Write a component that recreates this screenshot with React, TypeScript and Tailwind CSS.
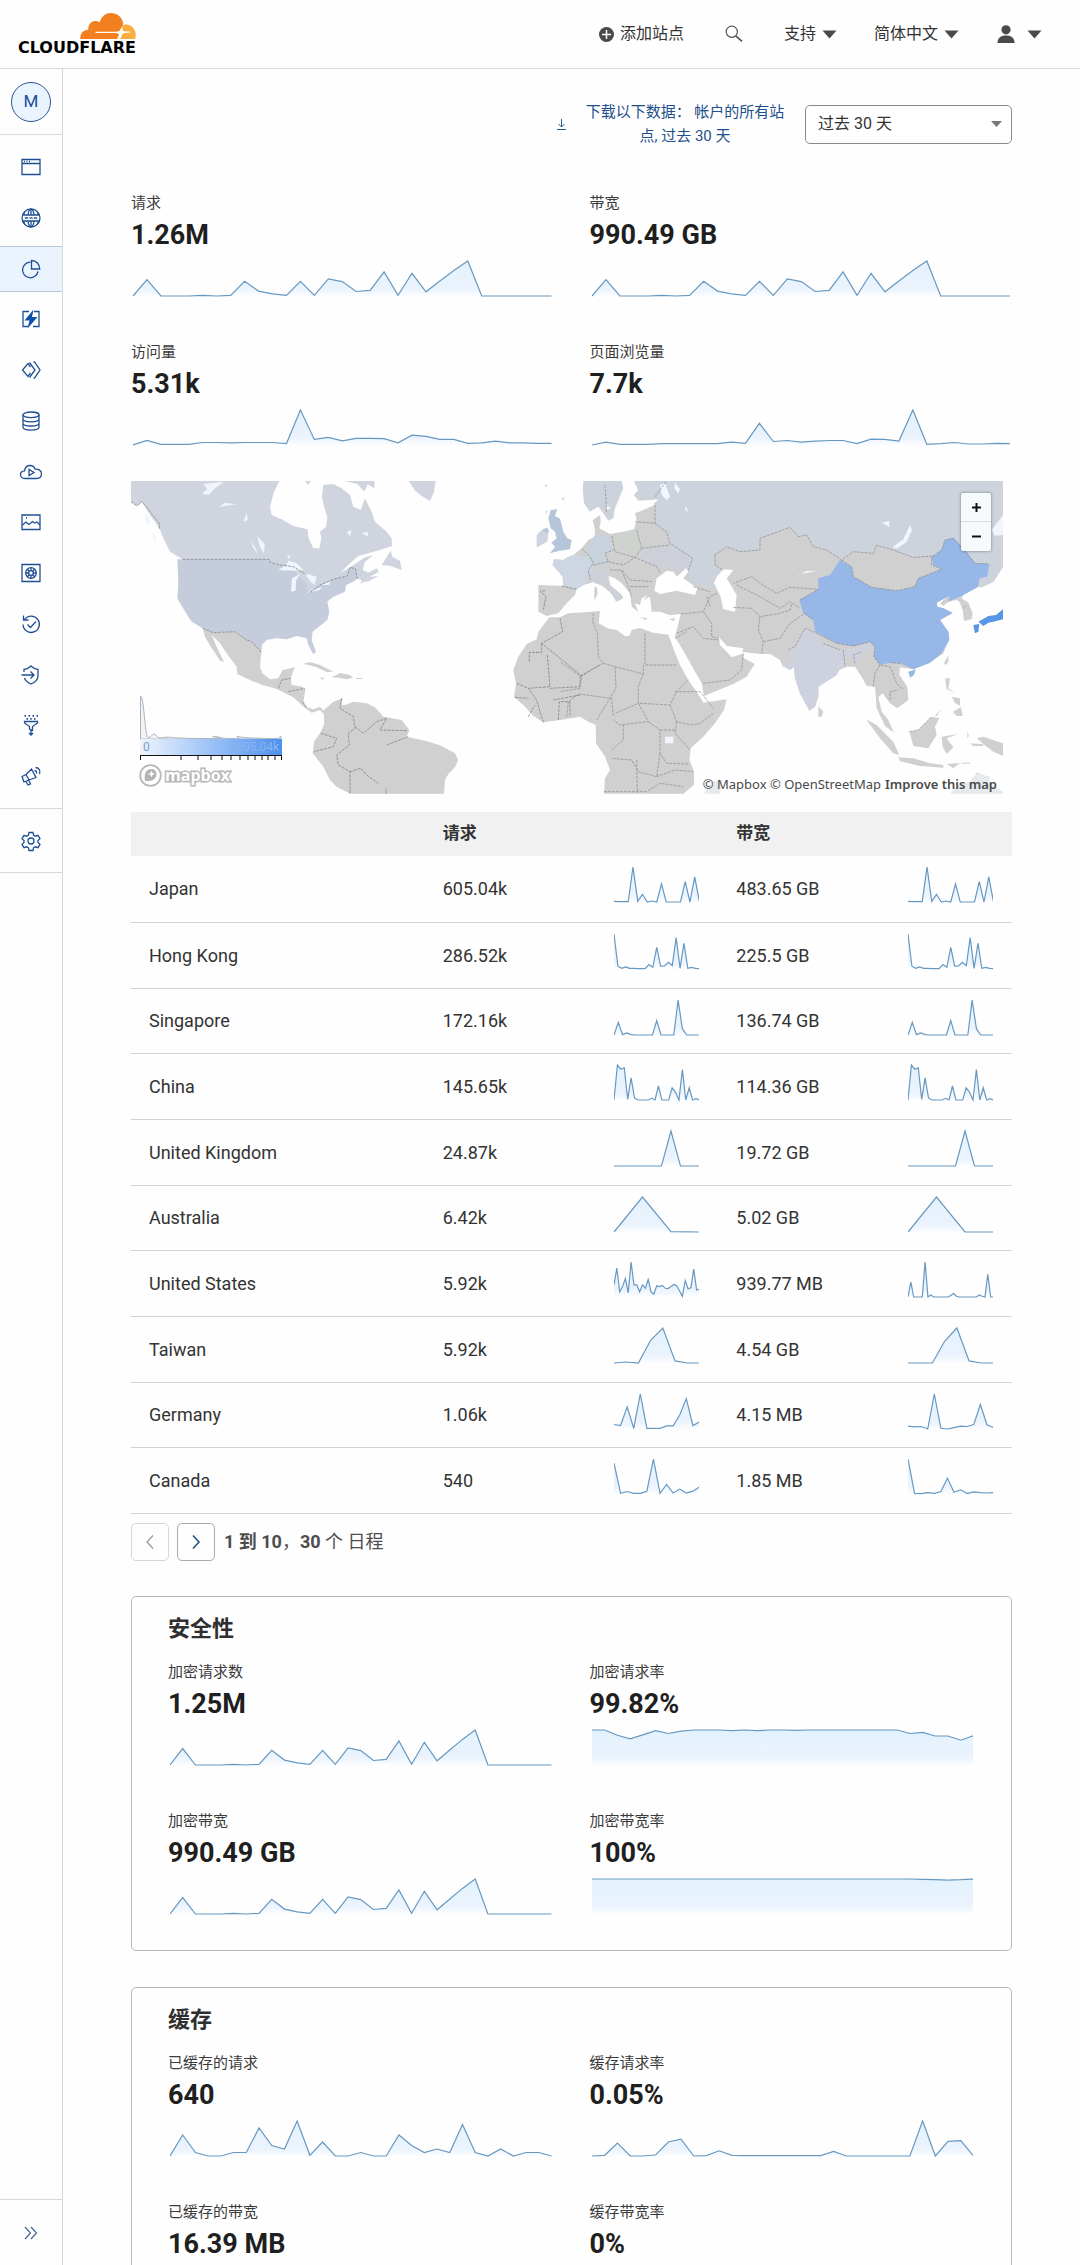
import React, { useId } from "react";

const requests = [0, 0.47, 0, 0, 0, 0.02, 0, 0.02, 0.42, 0.14, 0.06, 0.02, 0.42, 0.02, 0.49, 0.41, 0.13, 0.16, 0.69, 0.02, 0.65, 0.12, 0.43, 0.73, 1, 0, 0, 0, 0, 0, 0];
const visits = [0, 0.13, 0.02, 0.02, 0.02, 0.07, 0.07, 0.06, 0.07, 0.07, 0.07, 0.04, 1, 0.16, 0.22, 0.12, 0.19, 0.19, 0.18, 0.06, 0.28, 0.25, 0.16, 0.16, 0.05, 0.06, 0.11, 0.06, 0.06, 0.05, 0.05];
const pageViews = [0, 0.08, 0.02, 0.02, 0.02, 0.04, 0.04, 0.04, 0.04, 0.04, 0.08, 0.05, 0.62, 0.1, 0.13, 0.08, 0.11, 0.13, 0.13, 0.04, 0.17, 0.16, 0.11, 1, 0.02, 0.04, 0.07, 0.03, 0.03, 0.05, 0.04];
const encryptedRate = [1, 1, 0.85, 0.75, 0.86, 0.98, 0.9, 0.97, 1, 1, 1, 0.98, 1, 0.98, 1, 1, 0.99, 1, 1, 1, 1, 1, 1, 1, 1, 0.9, 0.93, 0.83, 0.83, 0.71, 0.84];
const encryptedBandwidthRate = [1, 1, 1, 1, 1, 1, 1, 1, 1, 1, 1, 1, 1, 1, 1, 1, 1, 1, 1, 1, 1, 1, 1, 1, 1, 1, 0.99, 0.98, 0.97, 0.98, 1];
const cachedRequests = [0, 0.6, 0.1, 0, 0, 0.1, 0.1, 0.8, 0.3, 0.2, 1, 0.02, 0.4, 0, 0, 0.1, 0, 0, 0.6, 0.3, 0.1, 0.2, 0.1, 0.9, 0.1, 0, 0.2, 0, 0.1, 0.1, 0];
const cacheRate = [0, 0.02, 0.37, 0, 0, 0.03, 0.4, 0.48, 0, 0.01, 0.15, 0.02, 0.01, 0.01, 0.01, 0.01, 0.01, 0.01, 0.01, 0.13, 0, 0, 0, 0, 0, 0, 1, 0, 0.42, 0.44, 0];

const japan = [0.02, 0.01, 0.01, 0.01, 1, 0.02, 0.22, 0, 0.03, 0, 0.52, 0, 0, 0, 0, 0.58, 0, 0.72, 0];
const hongKong = [1, 0.08, 0.02, 0.06, 0.02, 0.02, 0.01, 0.01, 0.01, 0.13, 0.05, 0.62, 0.08, 0.09, 0.19, 0.1, 0.9, 0.02, 0.73, 0.02, 0.05, 0.02, 0.01];
const singapore = [0, 0.36, 0.01, 0.06, 0.01, 0, 0, 0, 0, 0, 0.41, 0, 0, 0, 0, 1, 0.18, 0, 0, 0, 0];
const china = [0, 1, 0.88, 0.92, 0.02, 0.63, 0.06, 0, 0, 0, 0, 0.05, 0, 0.4, 0, 0, 0, 0.35, 0.22, 0, 0.87, 0, 0.35, 0, 0.04, 0];
const unitedKingdom = [0, 0, 0, 0, 0, 0, 1, 0, 0, 0];
const rows: { name: string; req: string; bw: string; a: number[]; b: number[] }[] = [
  { name: "Japan", req: "605.04k", bw: "483.65 GB", a: japan, b: japan },
  { name: "Hong Kong", req: "286.52k", bw: "225.5 GB", a: hongKong, b: hongKong },
  { name: "Singapore", req: "172.16k", bw: "136.74 GB", a: singapore, b: singapore },
  { name: "China", req: "145.65k", bw: "114.36 GB", a: china, b: china },
  { name: "United Kingdom", req: "24.87k", bw: "19.72 GB", a: unitedKingdom, b: unitedKingdom },
  { name: "Australia", req: "6.42k", bw: "5.02 GB", a: [0, 1, 0.01, 0], b: [0, 1, 0, 0] },
  {
    name: "United States", req: "5.92k", bw: "939.77 MB",
    a: [0.35, 0.83, 0.15, 0.3, 0.53, 0.12, 1, 0.35, 0.35, 0.15, 0.35, 0.25, 0.5, 0.15, 0.08, 0.32, 0.3, 0.33, 0.25, 0.24, 0.3, 0.36, 0.32, 0.18, 0.02, 0.47, 0.23, 0.27, 0.8, 0.2, 0.22],
    b: [0, 0.43, 0, 0, 0, 0, 1, 0, 0.06, 0, 0, 0, 0, 0, 0, 0.04, 0.1, 0.02, 0, 0, 0, 0, 0, 0, 0, 0.06, 0.02, 0, 0.65, 0, 0],
  },
  { name: "Taiwan", req: "5.92k", bw: "4.54 GB", a: [0, 0.03, 0, 0.65, 1, 0.06, 0, 0], b: [0, 0, 0, 0.62, 1, 0.06, 0, 0] },
  {
    name: "Germany", req: "1.06k", bw: "4.15 MB",
    a: [0.13, 0.1, 0.63, 0.02, 1, 0.02, 0.02, 0.02, 0.09, 0.09, 0.4, 0.87, 0.1, 0.2],
    b: [0.08, 0.06, 0.07, 0, 1, 0.02, 0, 0.04, 0.08, 0.07, 0.13, 0.7, 0.12, 0.04],
  },
  {
    name: "Canada", req: "540", bw: "1.85 MB",
    a: [0.88, 0.02, 0.07, 0.02, 0.02, 0.08, 1, 0.02, 0.27, 0.03, 0.14, 0.03, 0.08, 0.2],
    b: [1, 0.02, 0.01, 0.04, 0.02, 0.07, 0.45, 0.05, 0.12, 0.01, 0.06, 0.04, 0.03, 0.04],
  },
];

function Sparkline({ data }: { data: number[] }) {
  const id = useId();
  const pts = data.map((v, i) => `${((i / (data.length - 1)) * 1000).toFixed(1)},${(37 - v * 35).toFixed(1)}`).join(" ");
  return (
    <svg className="block h-[39px] w-full px-0.5" viewBox="0 0 1000 39" preserveAspectRatio="none" aria-hidden="true">
      <defs>
        <linearGradient id={id} gradientUnits="userSpaceOnUse" x1="0" y1="0" x2="0" y2="37">
          <stop offset="0" stopColor="#e2f2fd" />
          <stop offset="0.8" stopColor="#ebf3fd" />
          <stop offset="1" stopColor="#fbfdff" />
        </linearGradient>
      </defs>
      <polygon points={`0,37 ${pts} 1000,37`} fill={`url(#${id})`} />
      <polyline points={pts} fill="none" stroke="#6798c0" strokeWidth="1.2" vectorEffect="non-scaling-stroke" />
    </svg>
  );
}

function Stat({ label, value, data }: { label: string; value: string; data: number[] }) {
  return (
    <div>
      <div className="text-[15px] leading-6 text-[#3b3b3b]">{label}</div>
      <div className="mt-0.5 text-[27px] leading-9 font-bold text-[#1f1f1f]">{value}</div>
      <div className="mt-1.5">
        <Sparkline data={data} />
      </div>
    </div>
  );
}

function Card({ title, children }: { title: string; children: React.ReactNode }) {
  return (
    <section className="rounded-[5px] border border-[#b9b9b9] px-9 pt-4 pb-[34px]">
      <h2 className="mb-[15px] text-[22px] leading-8 font-bold text-[#2f2f2f]">{title}</h2>
      <div className="grid grid-cols-2 gap-x-9 gap-y-[42px]">{children}</div>
    </section>
  );
}

function Caret() {
  return (
    <svg className="h-[9px] w-[15px]" viewBox="0 0 15 9" fill="#4a4a4a" aria-hidden="true">
      <path d="M0.5 0.5h14L7.5 8.5z" />
    </svg>
  );
}

function Logo() {
  return (
    <a href="#home" className="flex flex-col items-end text-black">
      <svg className="h-[26px] w-[56px]" viewBox="0 0 160 75" aria-hidden="true">
        <path fill="#f38020" d="M0 75c-1-15 8-26 23-27-1-16 10-26 22-25 4 0 8 2 11 4C61 9 74 0 88 0c19 0 34 13 36 31l-7 21-11 23z" />
        <path fill="#faad3f" d="M122 36c3-3 6-3 9-3 17 0 29 14 29 30 0 4 0 8-2 12h-45l9-19z" />
        <path fill="#fff" d="M44 54l60 0 9-2 6-11 4 11 22 2v2l-18 2-6 4-5 13-4-13-8-4H44z" />
      </svg>
      <span className="mt-px font-['DejaVu_Sans',sans-serif] text-[16px] leading-4 font-bold">CLOUDFLARE</span>
    </a>
  );
}

function Header() {
  return (
    <header className="flex h-[69px] shrink-0 items-center justify-between border-b border-[#d9d9d9] pr-[38px] pl-[18px] text-[16px] text-[#333]">
      <Logo />
      <nav className="flex items-center">
        <button className="flex items-center gap-[6px]">
          <svg className="h-[15px] w-[15px]" viewBox="0 0 15 15" aria-hidden="true">
            <circle cx="7.5" cy="7.5" r="7.5" fill="#4a4a4a" />
            <path d="M7.5 3v9M3 7.5h9" stroke="#fff" strokeWidth="1.5" />
          </svg>
          添加站点
        </button>
        <button className="ml-[41px]" aria-label="搜索">
          <svg className="block h-[18px] w-[18px]" viewBox="0 0 18 18" fill="none" stroke="#555" strokeWidth="1.2" aria-hidden="true">
            <circle cx="6.8" cy="6.8" r="5.6" />
            <path d="M10.8 10.8l6.2 5.6" strokeWidth="1.7" />
          </svg>
        </button>
        <button className="ml-[41px] flex items-center gap-[6px]">支持<Caret /></button>
        <button className="ml-[37px] flex items-center gap-[6px]">简体中文<Caret /></button>
        <button className="ml-[38px] flex items-center gap-[12px]" aria-label="帐户">
          <svg className="h-[18px] w-[18px]" viewBox="0 0 18 18" fill="#4a4a4a" aria-hidden="true">
            <circle cx="9" cy="4.8" r="4.6" />
            <path d="M0.5 18c0-5 3-7.6 8.5-7.6s8.5 2.6 8.5 7.6z" />
          </svg>
          <Caret />
        </button>
      </nav>
    </header>
  );
}

const icons: { label: string; art: React.ReactNode }[] = [
  { label: "网站", art: <><path d="M1 2.5h18v15H1zM1 6.5h18" /><path d="M3 4.5h1M5.5 4.5h1M8 4.5h1" /></> },
  { label: "域注册", art: <><circle cx="10" cy="10" r="9" /><path d="M1.5 7h17M1.5 13h17M10 1v6M10 13v6" /><path d="M7 7c.3-3 1.4-5.5 3-6 1.6.5 2.7 3 3 6M7 13c.3 3 1.4 5.5 3 6 1.6-.5 2.7-3 3-6M4 3.5C3 5 2.8 6 2.8 7M16 3.5c1 1.5 1.2 2.5 1.2 3.5M4 16.5c-1-1.5-1.2-2.5-1.2-3.5M16 16.5c1-1.5 1.2-2.5 1.2-3.5" /><path d="M4 9l1 2 1-2 1 2M8.5 9l1 2 1-2 1 2M13 9l1 2 1-2 1 2" strokeWidth="0.9" /></> },
  { label: "分析", art: <><path d="M9.500 3.200A7.800 7.800 0 1 0 17 12.500" /><path d="M10.5 1.500v8.500h8.300c0-4.800-3.500-8.500-8.300-8.500z" /></> },
  { label: "Workers", art: <><path d="M8 2.5H2v15h5M13 2.5h5v15h-6" /><path d="M12.5 0.5L3.5 11.5h5l-2 8 10-11.500h-5.500z" fill="#0b50ad" stroke="none" /></> },
  { label: "Pages", art: <><path d="M9.500 13L7 16.500 1.500 10 7 3.500l2.500 3.500" /><path d="M8.500 2.500L14 10l-5.500 7.500M12.500 2h1l5.500 8-5.500 8h-1" /></> },
  { label: "R2", art: <><ellipse cx="10" cy="3.8" rx="8" ry="2.8" /><path d="M2 3.8v12.5c0 1.6 3.6 2.8 8 2.8s8-1.200 8-2.800V3.800M2 8c0 1.600 3.600 2.800 8 2.800S18 9.600 18 8M2 12.200C2 13.800 5.600 15 10 15s8-1.200 8-2.800" /></> },
  { label: "Stream", art: <><path d="M4 16.5C1 16.5-.5 14.5-.5 12.5S1 9 3.5 8.8C4 5.500 6 3.500 9 3.500c2.500 0 4.300 1.300 5 3.600 3.500-.3 6.500 1.500 6.500 4.700 0 3-2 4.700-5 4.700z" /><path d="M8 7.500v6l5-3z" /></> },
  { label: "Images", art: <><path d="M1 3h18v14.5H1z" /><path d="M1.5 13l3.5-3 3 2.5 3.5-3 2 1.5 2.5-1 3 3M5 6h1" /></> },
  { label: "虚拟", art: <><path d="M1 1.5h18v17H1z" /><circle cx="10" cy="10" r="5.3" /><circle cx="10" cy="10" r="2.3" /><path d="M10 4.7v3M10 12.3v3M4.7 10h3M12.3 10h3M6.3 6.3l2 2M11.7 11.7l2 2M13.7 6.3l-2 2M8.3 11.7l-2 2" /></> },
  { label: "运行状况", art: <><path d="M3.5 5.5a8.2 8.2 0 1 1-1.5 5" /><path d="M2.5 1.5v4.5h5M6.5 10.5l3 3 5.5-6" /></> },
  { label: "安全", art: <><path d="M3 7V4.5c3 0 5-1.5 7-3.500 2 2 4 3.500 7 3.500V11c0 4-3.500 6.500-7 8-3-1.300-5.500-3-6.500-6" /><path d="M.5 10h12M9.5 6.5L13 10l-3.5 3.5" /></> },
  { label: "规则", art: <><path d="M3.500.8h1.500M7.500.8H9M11.500.8H13M15.500.8H17M5.500 3.800H7M9.200 3.800h1.500M13 3.800h1.500" strokeWidth="1.8" /><path d="M3.500 6.500h13v1.500l-5 3.500v4l-3-1.500v-2.500l-5-3.500zM10 15v5M8 18l2 2 2-2" /></> },
  { label: "通知", art: <><path d="M1 10.5l4-2 3 5.500-5 2zM5 8.500l5.500-5.500L15 11.500l-7 2.500M5 15.500l2 3.500 2.500-1-2-4M13.500 4.500c1.500 0 2.500 1.500 2 3M14.500 1.500c3 0 5.500 3 4 6.500" /></> },
];

function SideIcon({ children }: { children: React.ReactNode }) {
  return (
    <svg className="h-5 w-5 overflow-visible" viewBox="0 0 20 20" fill="none" stroke="#1f4f93" strokeWidth="1.3" aria-hidden="true">
      {children}
    </svg>
  );
}

function Sidebar() {
  return (
    <aside className="flex w-[63px] shrink-0 flex-col border-r border-[#d9d9d9]">
      <div className="flex h-[66px] shrink-0 items-center justify-center border-b border-[#d9d9d9]">
        <button className="flex h-10 w-10 items-center justify-center rounded-full border border-[#2f5590] bg-[#e9f4ff] text-[17px] text-[#1c4e9c]">M</button>
      </div>
      <nav className="flex h-[674px] shrink-0 flex-col justify-between border-b border-[#d9d9d9] py-[9px]">
        {icons.map((icon, i) => (
          <a
            key={icon.label}
            href={`#nav-${i}`}
            aria-label={icon.label}
            aria-current={i === 2 ? "page" : undefined}
            className={
              i === 2
                ? "flex h-[46px] items-center justify-center border-y border-[#b3c8da] bg-[#ebf4fe]"
                : "flex h-[46px] items-center justify-center"
            }
          >
            <SideIcon>{icon.art}</SideIcon>
          </a>
        ))}
      </nav>
      <a href="#settings" aria-label="设置" className="flex h-16 shrink-0 items-center justify-center border-b border-[#d9d9d9]">
        <SideIcon>
          <circle cx="10" cy="10" r="3" />
          <path d="M8 1.500h4l.6 2.700 1.800 1 2.600-.9 2 3.400-2 1.900v1.800l2 1.900-2 3.400-2.600-.9-1.800 1-.6 2.700H8l-.6-2.700-1.800-1-2.600.9-2-3.400 2-1.900V9.600L1 7.700l2-3.400 2.600.9 1.800-1z" />
        </SideIcon>
      </a>
      <button aria-label="展开侧栏" className="mt-auto flex h-[66px] shrink-0 items-center justify-center border-t border-[#d9d9d9]">
        <svg className="h-3.5 w-3.5" viewBox="0 0 14 14" fill="none" stroke="#3f6a94" strokeWidth="1.2" aria-hidden="true">
          <path d="M1 1l5.500 6L1 13M7 1l5.500 6L7 13" />
        </svg>
      </button>
    </aside>
  );
}

function WorldMap() {
  return (
    <svg className="block h-full w-full" viewBox="33 33 2616 939" preserveAspectRatio="none" role="img" aria-label="地图">
      <g fill="#d0d0d0">
        <path d="M248 475L280 488 345 485 380 510 395 515 424 547 420 590 427 610 450 628 475 625 488 600 525 592 512 625 515 645 548 650 556 660 550 695 562 712 580 718 600 710 616 726 612 734 600 720 575 728 548 708 520 682 470 657 430 646 390 630 352 612 350 590 320 550 300 520 275 494 290 530 312 576 300 572 283 545 272 530 255 500Z" />
        <path d="M548 582L570 576 600 585 640 605 620 606 590 592 565 585zM636 622L660 609 690 615 700 623 680 628 660 624zM708 624h18v3h-18zM600 622l14 2-8 5z" />
        <path d="M612 720L640 695 668 685 664 705 675 705 700 695 740 700 765 712 790 740 845 750 868 780 860 800 915 812 960 826 1005 850 1014 870 1006 890 985 912 975 930 972 971H690L650 950 630 930 610 890 578 850 582 815 600 790 612 765Z" />
        <path d="M1288 442L1320 442 1345 430 1415 425 1440 423 1436 460 1462 475 1490 480 1515 498 1528 498 1535 480 1560 474 1600 488 1645 494 1662 540 1680 585 1705 630 1730 665 1750 698 1820 688 1812 720 1785 760 1750 800 1712 835 1708 870 1722 905 1722 945 1690 971H1452L1455 925 1470 900 1455 860 1428 820 1427 765 1405 755 1380 740 1320 750 1270 757 1240 738 1210 705 1182 682 1188 640 1180 600 1195 560 1220 522 1250 508 1255 485Z" />
      </g>
      <g fill="#cfd4de">
        <path d="M33 33H478L462 65 450 110 455 135 485 148 520 168 562 178 566 205 580 235 598 235 604 205 600 185 618 170 622 140 612 110 606 80 610 45 640 42 665 55 690 75 700 110 722 120 735 85 755 125 765 155 800 185 815 205 816 228 790 237 745 250 715 258 690 280 660 310 690 292 735 262 760 255 735 275 728 300 745 308 770 295 776 305 750 320 735 330 722 342 725 330 712 326 706 296 690 292 682 318 640 328 600 345 565 368 560 340 520 298 452 278 448 268H188L150 245 135 215 118 175 90 135 66 95 50 108 33 95Z" />
        <path d="M555 33h18l-10 12zM675 33h88v22l-20-12-10 22-20-22z" />
        <path d="M866 33H947L942 65 930 93 905 78 885 62zM785 285L812 242 818 262 840 272 845 300 830 295 812 288zM720 338l30-18 26-2-30 16z" />
      </g>
      <path fill="#c5cddd" d="M172 268H448L452 278 520 298 560 340 565 368 600 345 640 328 682 318 690 292 706 296 712 326 700 335 678 345 675 365 640 380 622 395 628 425 622 450 578 485 575 510 588 545 580 553 565 525 560 505 530 498 500 508 470 505 440 510 426 525 424 547 395 515 380 510 345 485 280 488 248 475 215 455 205 440 180 400 172 385 175 340Z" />
      <g fill="#f0f5fc">
        <path d="M475 300L500 285 505 272 530 280 550 300 520 302zM513 365L516 325 540 312 528 332 527 362zM550 308L590 320 584 345 572 335 565 325zM558 370L605 350 600 360zM605 345l27-12-5 12zM412 198l22 25-2 28-14-25zM392 210l15 25 5 15-12-15zM245 70L262 58 250 42 312 35 285 55 265 75zM297 112L315 98 348 103 315 108zM380 128l3 22-13 5zM680 185l15-5-5 20zM725 190l18-5 2 15z" />
        <path d="M75 125l15 20 0 20-15-10zM95 190l10 5 5 25zM500 260l12-6-5 12z" />
      </g>
      <path fill="#b6c6da" d="M1292 120L1312 118 1305 138 1320 146 1330 185 1342 205 1355 210 1350 238 1320 242 1290 250 1305 230 1294 218 1310 205 1305 185 1292 175 1285 145zM1268 178l14-5 6 14-18 6z" />
      <path fill="#cdd3df" d="M1250 195L1265 180 1285 190 1282 215 1250 232zM1273 45l10-2-4 8zM1325 85l8-3-2 10zM1276 125l6-5-2 12z" />
      <g transform="translate(1320 0)">
        <path fill="#d0d0d0" d="M-65 345L10 348 8 320-22 285-18 268 10 270 22 262 40 255 65 235 85 210 105 200 105 180 98 150 120 135 122 155 118 175 150 192 190 185 222 178 230 150 225 130 250 120 285 105 300 88 235 92 222 75 235 60 222 33H1329V290L1300 335 1265 352 1255 350 1210 375 1205 385 1225 398 1238 430 1235 448 1212 452 1208 420 1198 395 1190 390 1165 395 1150 408 1140 400 1165 378 1130 398 1132 410 1150 415 1178 430 1140 450 1165 485 1168 505 1150 550 1110 578 1060 598 1020 592 1018 615 1042 650 1045 690 1012 715 990 700 968 670 955 682 965 725 985 750 1002 788 975 768 950 715 945 650 920 648 905 620 885 590 860 590 838 600 830 615 775 650 775 680 765 710 748 722 720 670 705 625 702 590 690 600 668 588 660 570 630 552 600 552 545 545 552 565 584 582 560 620 520 642 432 678 425 640 380 560 345 500 362 432 330 436 300 425 275 425 270 380 250 390 262 375 245 385 240 405 225 400 235 425 215 410 210 370 185 340 165 325 145 318 150 345 185 375 190 385 175 380 168 395 160 375 130 350 105 335 70 345 50 358 45 375 20 400-5 430-40 438-65 425Z" />
        <g fill="#cdd3dd">
          <path d="M70 33H185L190 55 165 115 160 145 145 152 130 130 115 110 90 125 72 100 68 60zM222 33H320L285 80 260 88 235 90 225 75 235 60Z" />
          <path d="M320 33H1329V290L1300 335 1265 352 1258 320 1288 285 1240 280 1215 245 1180 205 1155 210 1145 240 1120 258 1060 262 1000 240 950 226 940 250 880 245 845 270 800 240 760 230 740 195 715 200 690 172 600 205 600 240 540 245 500 230 465 255 465 285 488 300 465 325 470 360 430 352 390 335 385 300 398 265 330 220 320 185 285 160 282 100 300 85 285 80Z" />
          <path d="M1170 971L1200 940 1230 935 1250 908 1290 920 1285 940 1329 965V971zM432 971L455 935 487 930 480 971z" />
        </g>
        <path fill="#ced6e2" d="M-22 285L-18 268 10 270 40 255 80 262 100 280 88 330 70 345 50 358 12 348 8 320z" />
        <path fill="#c7d2dc" d="M80 262L90 215 105 195 150 195 160 240 135 250 145 275 110 290 100 282z" />
        <path fill="#cfd3cf" d="M155 192L235 180 245 235 225 262 165 245z" />
        <path fill="#cdd0d8" d="M245 235L330 225 398 265 385 300 320 300 300 290 245 265zM85 310l55-15 10 50 35 30 5 10-20 10-30-45-35-10z" />
        <path fill="#cdd2de" d="M735 475L765 490 790 522 850 542 890 535 930 518 938 530 905 548 885 580 870 560 852 560 855 590 838 600 830 615 775 650 775 680 765 710 748 722 720 670 705 625 702 590 690 600 668 588 695 570 685 540 705 530z" />
        <path fill="#97b7e8" d="M718 390L775 358 775 325 810 315 840 270 875 290 880 320 935 352 1010 362 1065 350 1075 325 1145 298 1120 285 1115 262 1145 240 1155 210 1180 203 1220 245 1245 280 1288 282 1282 320 1258 325 1255 350 1210 375 1165 395 1168 378 1130 398 1132 410 1150 415 1178 428 1140 450 1165 485 1168 510 1145 550 1110 578 1060 598 1020 580 990 578 960 585 942 560 945 530 930 515 880 528 830 520 765 485 760 450 730 430zM1045 605l22-7-5 17-12 8z" />
        <path fill="#5596e6" d="M1240 465L1258 462 1255 485 1245 490zM1255 455L1285 438 1308 435 1329 418V448L1300 455 1285 458 1270 468z" />
        <path fill="#fff" d="M283 362L290 325 320 302 340 305 350 320 378 295 385 305 370 325 412 355 405 375 350 362 300 372zM470 320L490 298 520 300 500 325 515 350 530 375 525 425 490 418 482 380 462 340zM476 500L500 528 550 535 545 552 515 562 500 545 480 525z" />
        <path fill="#f2f6fc" d="M300 45l15-5 15 40-10 10-15-15zM345 38l15 20-5 12-12-15zM375 105l10 20-8-3zM997 232L1030 208 1050 165 1056 180 1040 215 1010 236zM712 318L740 302 768 304 720 312zM315 800h25v20h-25zM1295 180l34-45v60l-25 2zM138 105l15 8-12 8zM965 158l22-5 2 18z" />
        <g fill="#d0d0d0">
          <path d="M918 748L950 765 1000 815 1018 855 1000 850 960 805zM1015 862L1060 865 1110 880 1150 885 1150 893 1080 888 1020 874zM1048 785L1075 780 1115 740 1138 745 1125 770 1130 795 1105 835 1060 828zM1145 800L1195 792 1160 805 1180 832 1160 852 1148 830zM1155 625L1170 625 1165 655 1185 668 1160 657zM1178 725L1203 712 1208 738 1190 738zM1175 680l25 5v22l-15-8zM1250 805L1270 800 1329 820V858L1300 845 1270 822zM775 708L790 725 785 740 775 740zM1152 580L1165 555 1165 575 1157 585zM1145 715l-20 22 5 2zM1160 882l40-3-20 16zM1205 878h25v3h-25zM1222 785l5 12-5 8zM1230 820l40 3v5h-30zM240 442l22 3-5 5zM328 448l18-5-5 10zM103 352l8 0 2 20-10 20z" />
        </g>
      </g>
      <g fill="none" stroke="#7d7d7d" strokeWidth="2.2" strokeDasharray="9 3">
        <path d="M188 268H448L452 278 480 285 520 290 560 315M570 368L600 345 640 328 682 318 690 292 706 296 712 326M248 475L280 488 345 485 380 510 395 515 424 547M33 95L50 108 66 95 90 125 118 160V178" />
        <path d="M665 685L660 715 700 740 705 775 685 790 688 825 650 855 655 885 690 905 690 971M690 905L722 895 740 915 775 940M705 770L730 790 770 755 800 745 780 780 860 782M800 825L865 800M603 790L650 805 640 830 582 845M475 655L485 630 512 625M505 665l50-10M548 695l10 17M798 971v-15" />
        <path d="M1320 445L1328 485 1265 520 1385 618 1438 585M1228 575V547H1265V520M1282 555L1290 650 1225 655M1290 655L1380 650 1385 618M1190 640L1225 655 1250 690 1260 725 1270 757M1300 690L1380 675M1315 750L1318 695 1350 695V740M1185 682l40 3M1225 740l20-35" />
        <path d="M1275 362l-15 2 18 15-8 40M1325 348L1370 358" />
      </g>
      <g transform="translate(1320 0)" fill="none" stroke="#8a8a8a" strokeWidth="2" strokeDasharray="9 3">
        <path d="M100 430L98 455 112 490 115 560 130 580 60 618 0 575M130 580L165 590 250 612V585M255 490V585H350M250 610L235 650 235 700 165 730M165 590L168 655 110 750M60 618L60 655 0 665M20 740L25 695 55 672 155 685 160 740M240 700L330 705 350 665 385 630M235 700L265 755 180 765 160 750M330 705L350 755 395 765 420 760 460 730M350 755L345 790 390 840M300 780H345M265 755L300 780 300 850 320 880 385 882M300 850L290 920 235 905 215 870 155 865M290 920L345 900 400 905M132 965H260L300 940 370 950M230 870L232 968M345 665L420 665 460 715M155 840L190 810 190 765" />
        <path d="M465 255L500 230 540 245 600 240 600 205 690 172 715 200 740 195 760 230 800 240 845 270 880 245 940 250 950 226 1000 240 1060 262 1120 258 1145 240 1155 210 1180 205 1215 245 1245 280 1288 282M845 270L875 290 880 320 935 352 1010 362 1065 350 1075 325 1145 298 1115 285V262" />
        <path d="M465 255V285L488 300M720 390L775 358 690 352 650 370 600 340 575 320 520 340M530 345L560 360 600 380 660 415 690 395 720 415M520 412L575 415 600 440 660 430 690 420 695 400M600 440L595 480 610 515 605 550M610 515L660 505 690 460 735 430 760 450M685 540L705 530 735 475 760 485 830 520 880 528 930 515 945 530 942 560 960 585M790 520L840 540M850 540L855 590M885 580L880 555 905 545M940 650L945 610 960 585 990 590 1010 640 1030 660M990 690V665L1015 660M1020 580L990 578M1048 785L1075 780 1115 740" />
        <path d="M362 432L430 425 450 380 470 370M430 425L455 460 455 500 478 505M350 490L400 470 430 505 478 510M430 640L510 630 545 600 550 550M345 505L380 485M400 350L450 365M450 410L440 380" />
        <path d="M285 160L320 185 330 220 398 265 385 300M285 105V160L225 155M230 180L245 235 225 262 165 245 155 195M245 235L330 225M65 235L90 260 100 280 85 300 90 330M100 285L145 275 135 250 160 240M145 275L190 285 225 262 290 290 302 310M150 300L185 300 210 330 280 335M185 300L205 350 215 380M210 350H265M135 45L140 130M318 35L285 80M1115 262L1120 258M1210 415L1220 405" />
      </g>
    </svg>
  );
}

function Legend() {
  return (
    <div className="absolute bottom-[34px] left-[9px] w-[142px]">
      <svg className="block h-11 w-full" viewBox="0 0 142 44" preserveAspectRatio="none" aria-hidden="true">
        <path d="M0.5 44V1C4 1 5 42 8 42.500S12 39 14 39 17 43 20 43 25 42 28 42 32 43.500 65 43.500 70 41.500 73 41.500 78 43.500 92 43.500 95 41.500 97 41.500 102 43.500 138 43.500L141 41V44z" fill="#f1f3f5" stroke="#aab4bf" />
      </svg>
      <div className="flex h-4 items-center justify-between bg-linear-to-r from-[#eef4fd] via-[#9cc2f7] to-[#4a90ee] px-[3px] text-[12px] text-[#7d9ac4]">
        <span>0</span>
        <span className="text-[#8db4ec]">605.04k</span>
      </div>
      <svg className="block h-[5px] w-full" viewBox="0 0 142 5" preserveAspectRatio="none" stroke="#111" aria-hidden="true">
        <path d="M0 .5h142M.5 0v5M41 0v5M58 0v5M71 0v5M82 0v5M91 0v5M100 0v5M108 0v5M115 0v5M122 0v5M128 0v5M135 0v5M141.500 0v5" />
      </svg>
    </div>
  );
}

function MapPanel() {
  return (
    <div className="relative mt-[34px] mr-[9px] h-[313px] overflow-hidden">
      <WorldMap />
      <Legend />
      <a href="#mapbox" className="absolute bottom-[7px] left-2 flex items-center gap-[3px]">
        <svg className="h-[23px] w-[23px]" viewBox="0 0 23 23" aria-hidden="true">
          <circle cx="11.5" cy="11.5" r="10.3" fill="#fff" stroke="#b8b8b8" strokeWidth="1.8" />
          <path d="M6 17c-1-6 0-12 6.500-12 3 0 5 2.500 5 5 0 6-5.500 7.500-11.500 7z" fill="#b4b4b4" />
          <path d="M12.500 6.500l1 2.500 2.500 1-2.500 1-1 2.500-1-2.500-2.500-1 2.500-1z" fill="#fff" />
        </svg>
        <span className="font-['Open_Sans',sans-serif] text-[16px] leading-6 font-bold text-white [-webkit-text-stroke:3px_#b8b8b8] [paint-order:stroke_fill]">mapbox</span>
      </a>
      <div className="absolute top-3 right-3 flex w-[30px] flex-col rounded-[2px] bg-[#f7fafc] shadow-[0_0_3px_rgba(0,0,0,0.45)]">
        <button aria-label="放大" className="flex h-[29px] items-center justify-center border-b border-[#dcdcdc]">
          <svg className="h-[9px] w-[9px]" viewBox="0 0 9 9" stroke="#111" strokeWidth="2" aria-hidden="true"><path d="M0 4.5h9M4.5 0v9" /></svg>
        </button>
        <button aria-label="缩小" className="flex h-[29px] items-center justify-center">
          <svg className="h-[9px] w-[9px]" viewBox="0 0 9 9" stroke="#111" strokeWidth="2" aria-hidden="true"><path d="M0 4.5h9" /></svg>
        </button>
      </div>
      <div className="absolute right-0 bottom-0 flex gap-1 bg-white/50 px-1.5 font-['Noto_Sans',sans-serif] text-[13px] leading-5 text-[#4a4a4a]">
        <span><a href="#mapbox">© Mapbox</a> <a href="#osm">© OpenStreetMap</a></span>
        <a href="#improve" className="font-semibold">Improve this map</a>
      </div>
    </div>
  );
}

function CountryTable() {
  return (
    <table className="mt-[18px] w-full table-fixed border-collapse text-left text-[18px] text-[#333]">
      <thead>
        <tr className="h-[44px] bg-[#f1f1f1] text-[17px]">
          <th className="w-1/3" />
          <th className="w-1/5 pl-[18px] font-bold">请求</th>
          <th className="w-[13.3333%]" />
          <th className="w-1/5 pl-[18px] font-bold">带宽</th>
          <th className="w-[13.3333%]" />
        </tr>
      </thead>
      <tbody>
        {rows.map((r) => (
          <tr key={r.name} className="h-[66px] border-b border-[#d3d3d3] nth-[3n]:h-[65px]">
            <td className="pl-[18px]">{r.name}</td>
            <td className="pl-[18px]">{r.req}</td>
            <td className="pt-[9px] pr-[17px] pl-[11px] align-top"><Sparkline data={r.a} /></td>
            <td className="pl-[18px]">{r.bw}</td>
            <td className="pt-[9px] pr-[17px] pl-[11px] align-top"><Sparkline data={r.b} /></td>
          </tr>
        ))}
      </tbody>
    </table>
  );
}

function Pager() {
  return (
    <div className="mt-[9px] flex items-center text-[18px] text-[#4d4d4d]">
      <button disabled aria-label="上一页" className="flex h-[38px] w-[38px] items-center justify-center rounded-[5px] border border-[#d6d6d6]">
        <svg className="h-4 w-4" viewBox="0 0 16 16" fill="none" stroke="#9a9a9a" strokeWidth="1.3" aria-hidden="true"><path d="M11 1.500L5 8l6 6.500" /></svg>
      </button>
      <button aria-label="下一页" className="ml-2 flex h-[38px] w-[38px] items-center justify-center rounded-[5px] border border-[#aaa]">
        <svg className="h-4 w-4" viewBox="0 0 16 16" fill="none" stroke="#1f4f80" strokeWidth="1.5" aria-hidden="true"><path d="M5 1.500L11 8l-6 6.500" /></svg>
      </button>
      <p className="ml-[9px]"><b>1 到 10</b>，<b>30</b> 个 日程</p>
    </div>
  );
}

export default function App() {
  return (
    <div className="flex h-screen flex-col overflow-hidden bg-[#fefefe] font-[Roboto,'Noto_Sans_CJK_SC',sans-serif]">
      <Header />
      <div className="flex min-h-0 flex-1">
        <Sidebar />
        <main className="min-w-0 flex-1 overflow-y-auto px-[68px] pt-[31px] pb-9 [scrollbar-width:none]">
          <div className="flex items-center justify-end">
            <button className="flex items-center gap-4 text-[15px] leading-6 text-[#1d4f8c]">
              <svg className="h-[11px] w-[9px] shrink-0" viewBox="0 0 9 11" fill="none" stroke="#1d5f96" aria-hidden="true"><path d="M4.500 0v8M1.500 5l3 3 3-3M0 10.500h9" /></svg>
              <span className="w-[206px] text-center">下载以下数据： 帐户的所有站点, 过去 30 天</span>
            </button>
            <div className="relative ml-[17px] w-[207px]">
              <select aria-label="时间范围" className="h-[39px] w-full appearance-none rounded-[5px] border border-[#8a8a8a] bg-white px-3 text-[16px] text-[#333]">
                <option>过去 30 天</option>
              </select>
              <svg className="pointer-events-none absolute top-4 right-[10px] h-[6px] w-[11px]" viewBox="0 0 11 6" fill="#777" aria-hidden="true"><path d="M0 0h11L5.500 6z" /></svg>
            </div>
          </div>
          <div className="mt-[43px] grid grid-cols-2 gap-x-9 gap-y-[42px]">
            <Stat label="请求" value="1.26M" data={requests} />
            <Stat label="带宽" value="990.49 GB" data={requests} />
            <Stat label="访问量" value="5.31k" data={visits} />
            <Stat label="页面浏览量" value="7.7k" data={pageViews} />
          </div>
          <MapPanel />
          <CountryTable />
          <Pager />
          <div className="mt-[35px] flex flex-col gap-9">
            <Card title="安全性">
              <Stat label="加密请求数" value="1.25M" data={requests} />
              <Stat label="加密请求率" value="99.82%" data={encryptedRate} />
              <Stat label="加密带宽" value="990.49 GB" data={requests} />
              <Stat label="加密带宽率" value="100%" data={encryptedBandwidthRate} />
            </Card>
            <Card title="缓存">
              <Stat label="已缓存的请求" value="640" data={cachedRequests} />
              <Stat label="缓存请求率" value="0.05%" data={cacheRate} />
              <Stat label="已缓存的带宽" value="16.39 MB" data={cachedRequests} />
              <Stat label="缓存带宽率" value="0%" data={cacheRate} />
            </Card>
          </div>
        </main>
      </div>
    </div>
  );
}
